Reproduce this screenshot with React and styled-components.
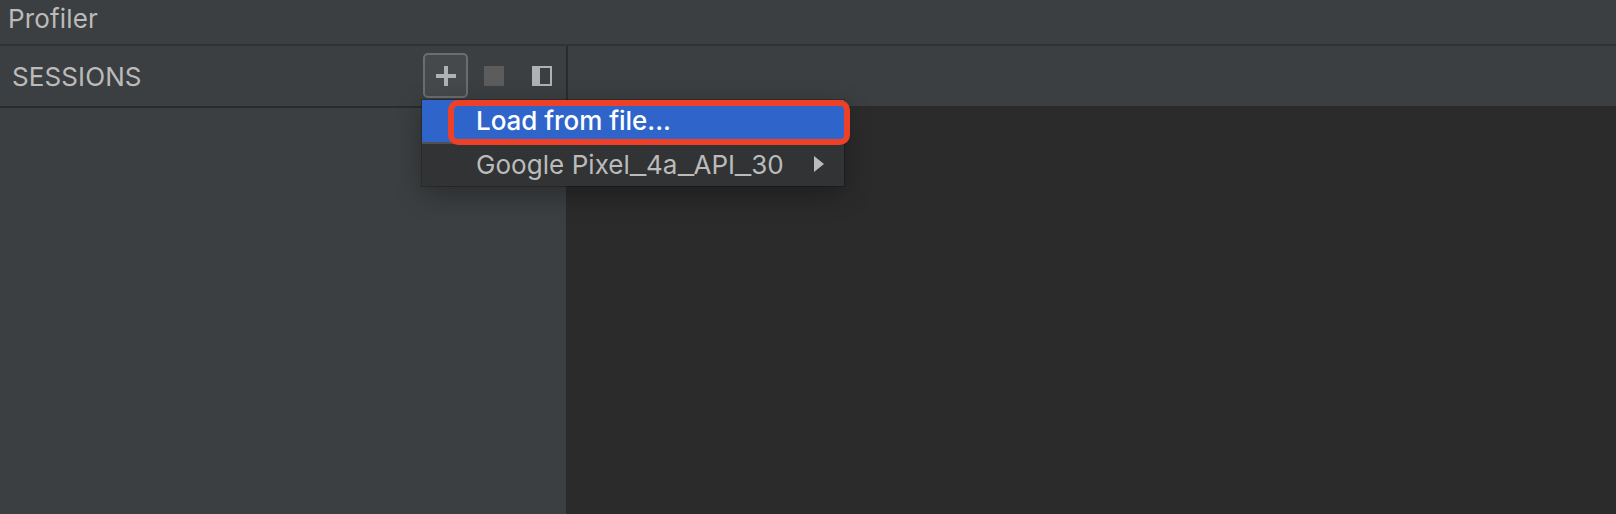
import React from "react";
import styled, { createGlobalStyle } from "styled-components";

const GlobalStyle = createGlobalStyle`
  * { box-sizing: border-box; }
  body { margin: 0; background: #2b2b2b; overflow: hidden; }
`;

const Window = styled.div`
  display: flex;
  flex-direction: column;
  width: 100%;
  height: 100vh;
  background: #2b2b2b;
  color: #bbbbbb;
  font: 400 26px/32px Inter, "Liberation Sans", sans-serif;
  white-space: nowrap;
`;

const TitleBar = styled.header`
  flex: none;
  height: 46px;
  padding: 3px 8px 0;
  background: #3c3f41;
  border-bottom: 2px solid #323232;
`;

const Workspace = styled.div`
  display: flex;
  flex: 1;
  min-height: 0;
`;

const Sidebar = styled.aside`
  display: flex;
  flex-direction: column;
  width: 566px;
  background: #3c3f41;
`;

const SessionsBar = styled.div`
  position: relative;
  display: flex;
  align-items: center;
  justify-content: space-between;
  height: 62px;
  padding: 0 14px 0 12px;
  border-bottom: 2px solid #2b2b2b;
`;

const Label = styled.span`
  display: block;
  letter-spacing: ${(p) => p.$spacing || "0"};
`;

const SessionsTitle = styled(Label)`
  padding-top: 1px;
`;

const WideUnderscore = styled.span`
  display: inline-block;
  margin: 0 2.1px;
  letter-spacing: 0;
  transform: scaleX(1.4);
`;

const Actions = styled.div`
  display: flex;
  align-items: center;
  height: 46px;
  gap: 16px;
  svg { display: block; }
`;

const AddButton = styled.button`
  display: grid;
  place-items: center;
  width: 45px;
  height: 45px;
  margin: 0 0 1px;
  padding: 1px 0 0 1px;
  border: 2px solid #6a6e72;
  border-radius: 5px;
  background: #45494c;
`;

const IconButton = styled.button`
  width: 20px;
  height: 20px;
  padding: 0;
  border: 0;
  background: none;
  & + & { margin-left: 12px; }
`;

const Menu = styled.div`
  position: absolute;
  z-index: 1;
  left: 422px;
  top: 54px;
  width: 422px;
  height: 86px;
  background: #323335;
  box-shadow: 0 0 0 1px rgba(0, 0, 0, 0.22), 0 8px 28px rgba(0, 0, 0, 0.32);
`;

const MenuItem = styled.div`
  display: flex;
  align-items: center;
  justify-content: space-between;
  height: ${(p) => (p.$active ? "44px" : "42px")};
  padding: 0 20px 0 54px;
  color: ${(p) => (p.$active ? "#ffffff" : "#bbbbbb")};
  font-weight: ${(p) => (p.$active ? 500 : 400)};
  background: ${(p) => (p.$active ? "#2f65ca" : "transparent")};
  background-clip: padding-box;
  border-bottom: ${(p) => (p.$active ? "2px solid #515151" : "0")};
`;

const SubmenuArrow = styled.svg`
  margin-bottom: 2px;
`;

const Highlight = styled.div`
  position: absolute;
  left: 26px;
  top: 0;
  width: 402px;
  height: 45px;
  border: 6px solid #ee4026;
  border-radius: 10px;
`;

const Main = styled.main`
  flex: 1;
  background: #2b2b2b;
`;

const MainToolbar = styled.div`
  height: 60px;
  background: #3c3f41;
  border-left: 2px solid #2b2b2b;
`;

export default function App() {
  return (
    <Window>
      <GlobalStyle />
      <TitleBar><Label $spacing="0.15px">Profiler</Label></TitleBar>
      <Workspace>
        <Sidebar>
          <SessionsBar>
            <SessionsTitle $spacing="0.1px">SESSIONS</SessionsTitle>
            <Actions>
              <AddButton aria-label="Add session">
                <svg width="20" height="20" fill="#afb1b3"><path d="M8 0h4v8h8v4h-8v8H8v-8H0V8h8z" /></svg>
              </AddButton>
              <IconButton aria-label="Stop session">
                <svg width="20" height="20" fill="#5c5c5c"><path d="M0 0h20v20H0z" /></svg>
              </IconButton>
              <IconButton aria-label="Collapse sessions">
                <svg width="20" height="20" fill="#afb1b3"><path fillRule="evenodd" d="M0 0h20v20H0zM8 2v16h10V2z" /></svg>
              </IconButton>
            </Actions>
            <Menu>
              <MenuItem $active><Label $spacing="-0.04px">Load from file...</Label></MenuItem>
              <MenuItem>
                <Label $spacing="0.05px">
                  Google Pixel<WideUnderscore>_</WideUnderscore>4a<WideUnderscore>_</WideUnderscore>API<WideUnderscore>_</WideUnderscore>30
                </Label>
                <SubmenuArrow width="10" height="16" fill="#bbbbbb"><path d="M0 0l10 8-10 8z" /></SubmenuArrow>
              </MenuItem>
              <Highlight />
            </Menu>
          </SessionsBar>
        </Sidebar>
        <Main><MainToolbar /></Main>
      </Workspace>
    </Window>
  );
}
